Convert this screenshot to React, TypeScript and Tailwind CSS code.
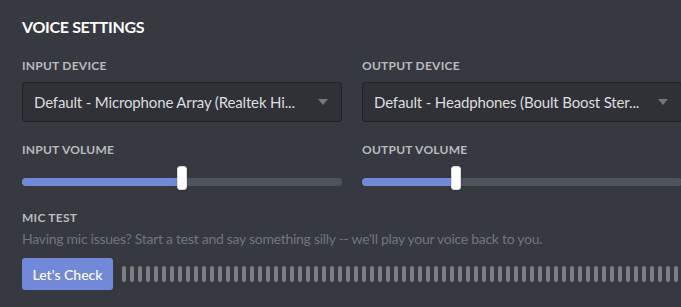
const font = { fontFamily: 'Lato, "Noto Sans", sans-serif' };

function Label({ children }: { children: string }) {
  return (
    <div className="text-[12px] leading-4 font-bold uppercase tracking-[0.02em] text-[#b9bbbe]">
      {children}
    </div>
  );
}

function Select({ value }: { value: string }) {
  return (
    <div className="mt-2 h-10 flex items-center justify-between rounded-[3px] border border-[#202225] bg-[#2f3136] pl-[11px] pr-[13px]">
      <span className="text-[15px] tracking-[-0.01em] text-[#dcddde] whitespace-nowrap">{value}</span>
      <svg width="10" height="6" viewBox="0 0 10 6" className="shrink-0 ml-2">
        <path d="M0 0 L10 0 L5 6 Z" fill="#72767d" />
      </svg>
    </div>
  );
}

function Slider({ value }: { value: number }) {
  return (
    <div className="relative h-[40px] mt-[4px]">
      <div className="absolute left-0 right-0 top-[16px] h-2 rounded bg-[#4f545c]" />
      <div
        className="absolute left-0 top-[16px] h-2 rounded bg-[#7289da]"
        style={{ width: `${value}%` }}
      />
      <div
        className="absolute top-[4px] w-[10px] h-6 -ml-[5px] rounded-[3px] bg-white shadow border border-[#dcddde]"
        style={{ left: `${value}%` }}
      />
    </div>
  );
}

export default function App() {
  return (
    <div className="min-h-screen w-[681px] h-[307px] overflow-hidden bg-[#36393f] pl-[22px] pt-[17px]" style={font}>
      <div className="w-[700px]">
        <h2 className="text-[16px] leading-5 font-bold uppercase tracking-[-0.02em] text-white">Voice Settings</h2>

        <div className="mt-[21px] grid grid-cols-[320px_320px] gap-x-5">
          <div>
            <Label>Input Device</Label>
            <Select value="Default - Microphone Array (Realtek Hi..." />
          </div>
          <div>
            <Label>Output Device</Label>
            <Select value="Default - Headphones (Boult Boost Ster..." />
          </div>

          <div className="mt-[20px]">
            <Label>Input Volume</Label>
            <Slider value={50} />
          </div>
          <div className="mt-[20px]">
            <Label>Output Volume</Label>
            <Slider value={29.5} />
          </div>
        </div>

        <div className="mt-[8px]">
          <Label>Mic Test</Label>
          <p className="mt-[4px] text-[14px] leading-[18px] tracking-[-0.02em] text-[#72767d]">
            Having mic issues? Start a test and say something silly -- we'll play your voice back to you.
          </p>
          <div className="mt-[10px] flex items-center">
            <button className="shrink-0 h-8 w-[91px] rounded-[3px] bg-[#7289da] text-[14px] font-medium text-white">
              Let's Check
            </button>
            <div className="ml-[9px] min-w-0 flex gap-1 overflow-hidden">
              {Array.from({ length: 80 }).map((_, i) => (
                <div key={i} className="w-1 h-4 shrink-0 rounded-sm bg-[#7c7f85]" />
              ))}
            </div>
          </div>
        </div>
      </div>
    </div>
  );
}
